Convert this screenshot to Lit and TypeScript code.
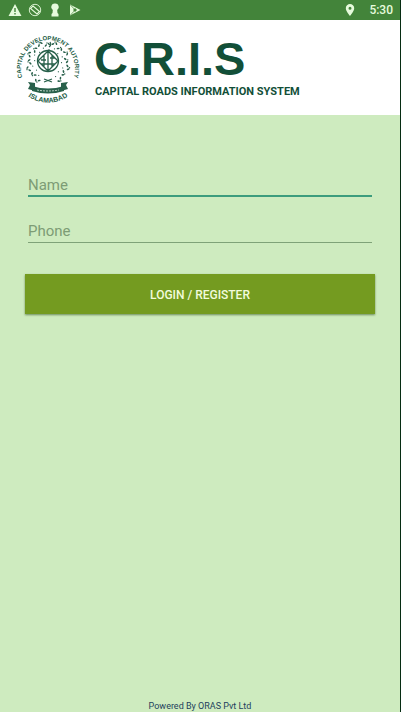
import { LitElement, html, css, svg } from "lit";
import { customElement } from "lit/decorators.js";

@customElement("status-bar")
class StatusBar extends LitElement {
  static styles = css`
    :host {
      display: flex;
      align-items: center;
      height: 20px;
      padding: 0 7px 0 8px;
      background: #43843a;
      color: #e6fbdc;
      font: 500 12px/20px Roboto, sans-serif;
    }
    .icons {
      display: flex;
      gap: 6px;
      flex: 1;
    }
    svg {
      display: block;
      width: 14px;
      height: 16px;
      fill: currentColor;
    }
    .pin {
      margin-right: 12px;
    }
  `;

  render() {
    return html`
      <div class="icons">
        <svg viewBox="0 0 14 16" aria-hidden="true">
          <path fill-rule="evenodd" d="M7 2 13.5 14H.5ZM6.3 6v4h1.4V6ZM6.3 11v1.5h1.4V11Z" />
        </svg>
        <svg viewBox="0 0 14 16" aria-hidden="true">
          <circle cx="7" cy="8" r="5.700" fill="none" stroke="currentColor" stroke-width=".9" />
          <path d="M5 4 11.500 9.500 9 12 2.500 6.500Z" fill="none" stroke="currentColor" stroke-width="1.100" />
        </svg>
        <svg viewBox="0 0 14 16" aria-hidden="true">
          <path d="M7 1.500a3.600 3.600 0 0 1 2.200 6.600L9.500 11 10.500 12v2.500h-7V12l1-1 .3-2.900A3.600 3.600 0 0 1 7 1.500Z" />
        </svg>
        <svg viewBox="0 0 14 16" aria-hidden="true">
          <path fill-rule="evenodd" d="M2 2.500 12.500 8 2 13.500ZM7 6 9 8 7 10 5 8Z" />
          <path d="M2.500 3 8 9M2.500 13 8 7" stroke="#43843a" stroke-width=".7" />
        </svg>
      </div>
      <svg class="pin" viewBox="0 0 14 16" aria-hidden="true">
        <path fill-rule="evenodd" d="M7 2a4.200 4.200 0 0 1 4.200 4.200C11.200 9.200 7 14 7 14S2.800 9.200 2.800 6.200A4.200 4.200 0 0 1 7 2ZM7 4.700a1.500 1.500 0 1 0 0 3 1.500 1.500 0 0 0 0-3Z" />
      </svg>
      <span>5:30</span>
    `;
  }
}

const leaves = Array.from({ length: 15 }, (_, i) => {
  const deg = 123 + i * 21;
  const a = (deg * Math.PI) / 180;
  const r = i % 2 ? 17 : 19;
  return { x: 38 + r * Math.cos(a), y: 39 + r * Math.sin(a), deg };
});

@customElement("authority-emblem")
class AuthorityEmblem extends LitElement {
  static styles = css`
    :host {
      display: block;
    }
    svg {
      display: block;
      width: 80px;
      height: 90px;
    }
    text {
      font: 700 6px "Liberation Sans", Arial, sans-serif;
      fill: #235c44;
      text-anchor: middle;
    }
    .city {
      font-size: 7px;
    }
    .ink {
      fill: #28604a;
    }
    .line {
      fill: none;
      stroke: #28604a;
    }
    .motto {
      fill: none;
      stroke: #b9d0c4;
    }
  `;

  render() {
    return html`
      <svg viewBox="0 0 80 90" role="img" aria-label="Capital Development Authority Islamabad">
        <defs>
          <path id="upper" d="M13 58A27 29 0 1 1 63 58" />
          <path id="lower" d="M15 70A34 33 0 0 0 61 70" />
        </defs>
        <g transform="translate(0 -2)">
          <text><textPath href="#upper" startOffset="50%">CAPITAL DEVELOPMENT AUTORITY</textPath></text>
        </g>
        <text class="city"><textPath href="#lower" startOffset="50%">ISLAMABAD</textPath></text>
        ${leaves.map(
          (l) => svg`<g class="ink" transform="translate(${l.x} ${l.y}) rotate(${l.deg})">
            <ellipse cx="-1" cy="-2" rx="1.500" ry=".8" transform="rotate(40)" />
            <ellipse cx="1" cy="2" rx="1.500" ry=".8" transform="rotate(-40)" />
            <circle cx="3" cy="-1" r=".7" />
            <circle cx="-3.500" cy="1" r=".6" />
          </g>`
        )}
        <circle class="line" cx="38" cy="37" r="10.500" stroke-width="1.300" />
        <path class="line" stroke-width="1.300" d="M38 27 28 37 38 47 48 37ZM34 31v12M38 28v18M42 31v12M31 36h5M40 34h5M31 40h14" />
        <path class="line" stroke-width="1.200" d="M40 18q2 3-1 5M34 55l8 3M42 55l-8 3" />
        <path class="ink" d="M18 58l7 1v8l-7-2 2-4ZM58 58l-7 1v8l7-2-2-4Z" />
        <path class="ink" d="M22 62q16 5 32 0v5q-16 5-32 0Z" />
        <path class="motto" stroke-width="1" stroke-dasharray="2 1" d="M27 66q11 2 22 0" />
      </svg>
    `;
  }
}

@customElement("app-root")
class AppRoot extends LitElement {
  static styles = css`
    :host {
      display: flex;
      flex-direction: column;
      box-sizing: border-box;
      min-height: 100vh;
      border-right: 1px solid #062c12;
      background: #ceebbf;
      font-family: Roboto, sans-serif;
    }
    header {
      display: flex;
      gap: 4px;
      padding: 4px 10px 1px;
      background: #fff;
      color: #124f38;
      font-family: "Liberation Sans", Arial, sans-serif;
      font-weight: 700;
    }
    .brand {
      padding: 7px 0 0;
    }
    h1 {
      margin: 0;
      font-size: 47px;
      line-height: 55px;
    }
    .tagline {
      margin: 0 0 0 1px;
      font-family: Roboto, sans-serif;
      font-size: 11px;
      line-height: 12px;
      white-space: nowrap;
    }
    form {
      display: flex;
      flex-direction: column;
      padding: 58px 25px 0;
    }
    input {
      box-sizing: border-box;
      height: 24px;
      margin: 0 3px 22px;
      padding: 1px 0 0;
      border: 0;
      border-bottom: 1px solid #7fa278;
      outline: 0;
      background: none;
      color: #2d4429;
      font: 15px/20px Roboto, sans-serif;
    }
    input.active {
      border-bottom: 2px solid #3d9c7d;
    }
    input::placeholder {
      color: #7d9c75;
      opacity: 1;
    }
    button {
      height: 40px;
      margin-top: 9px;
      padding: 2px 0 0;
      border: 0;
      background: #749b20;
      color: #f2fbdc;
      box-shadow: 0 1px 2px #6c8b5c;
      font: 500 12px/16px Roboto, sans-serif;
    }
    footer {
      margin-top: auto;
      color: #1d3f5c;
      font-size: 9px;
      line-height: 12px;
      text-align: center;
    }
  `;

  render() {
    return html`
      <status-bar></status-bar>
      <header>
        <authority-emblem></authority-emblem>
        <div class="brand">
          <h1>C.R.I.S</h1>
          <p class="tagline">CAPITAL ROADS INFORMATION SYSTEM</p>
        </div>
      </header>
      <form @submit=${(e: Event) => e.preventDefault()}>
        <input class="active" type="text" name="name" placeholder="Name" aria-label="Name" />
        <input type="tel" name="phone" placeholder="Phone" aria-label="Phone" />
        <button type="submit">LOGIN / REGISTER</button>
      </form>
      <footer>Powered By ORAS Pvt Ltd</footer>
    `;
  }
}
